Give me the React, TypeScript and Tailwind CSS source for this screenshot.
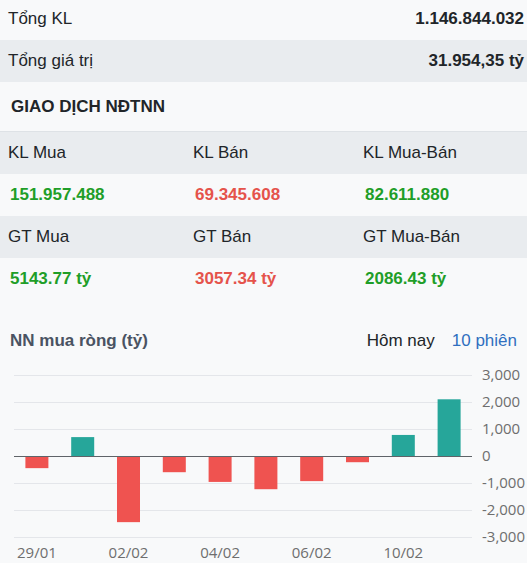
import React from "react";

const values = [-450, 700, -2450, -600, -960, -1230, -930, -230, 780, 2100];
const xLabels: [number, string][] = [
  [0, "29/01"],
  [2, "02/02"],
  [4, "04/02"],
  [6, "06/02"],
  [8, "10/02"],
];
const ticks = [3000, 2000, 1000, 0, -1000, -2000, -3000];

function Chart() {
  const x0 = 14;
  const x1 = 472;
  const zeroY = 98;
  const scale = 27 / 1000;
  const step = (x1 - x0) / values.length;
  const bw = 23;
  return (
    <svg width={527} height={204} className="block">
      {ticks.map((t) => {
        const y = zeroY - t * scale;
        return (
          <g key={t}>
            {t !== 0 && (
              <line x1={x0} x2={x1} y1={y + 0.5} y2={y + 0.5} stroke="#e4e6ea" strokeWidth={1} />
            )}
            <text
              x={482}
              y={y + 5}
              fontSize={15}
              fill="#6e6e6e"
              fontFamily="'Open Sans', 'Noto Sans', sans-serif"
            >
              {t.toLocaleString("en-US")}
            </text>
          </g>
        );
      })}
      {values.map((v, i) => {
        const cx = x0 + step * (i + 0.5);
        const h = Math.abs(v) * scale;
        const y = v >= 0 ? zeroY - h : zeroY;
        return (
          <rect
            key={i}
            x={cx - bw / 2}
            y={y}
            width={bw}
            height={h}
            fill={v >= 0 ? "#26a69a" : "#ef5350"}
          />
        );
      })}
      <line x1={x0} x2={x1} y1={zeroY + 0.5} y2={zeroY + 0.5} stroke="#5f6368" strokeWidth={1} />
      {xLabels.map(([i, l]) => (
        <text
          key={l}
          x={x0 + step * (i + 0.5)}
          y={200}
          fontSize={15}
          textAnchor="middle"
          fill="#6e6e6e"
          fontFamily="'Open Sans', 'Noto Sans', sans-serif"
        >
          {l}
        </text>
      ))}
    </svg>
  );
}

const green = "text-[#1f9e28]";
const red = "text-[#e5534b]";

export default function App() {
  return (
    <div className="w-[527px] h-[563px] overflow-hidden bg-[#f8f9fa] text-[17px] text-[#212529] font-['Liberation_Sans',Arial,sans-serif]">
      <div className="flex h-[40px] items-center justify-between pl-[8px] pr-[3px] pb-[3px]">
        <span>Tổng KL</span>
        <span className="font-bold">1.146.844.032</span>
      </div>
      <div className="flex h-[42px] items-center justify-between bg-[#e9ecef] pl-[8px] pr-[3px]">
        <span>Tổng giá trị</span>
        <span className="font-bold">31.954,35 tỷ</span>
      </div>
      <div className="flex h-[50px] items-center border-b border-[#dee2e6] pl-[11px] font-bold">
        GIAO DỊCH NĐTNN
      </div>
      <div className="grid grid-cols-[185px_170px_1fr]">
        <div className="flex h-[42px] items-center bg-[#e9ecef] pl-[8px]">KL Mua</div>
        <div className="flex h-[42px] items-center bg-[#e9ecef] pl-[8px]">KL Bán</div>
        <div className="flex h-[42px] items-center bg-[#e9ecef] pl-[8px]">KL Mua-Bán</div>
        <div className={`flex h-[42px] items-center pl-[10px] font-bold ${green}`}>151.957.488</div>
        <div className={`flex h-[42px] items-center pl-[10px] font-bold ${red}`}>69.345.608</div>
        <div className={`flex h-[42px] items-center pl-[10px] font-bold ${green}`}>82.611.880</div>
        <div className="flex h-[42px] items-center bg-[#e9ecef] pl-[8px]">GT Mua</div>
        <div className="flex h-[42px] items-center bg-[#e9ecef] pl-[8px]">GT Bán</div>
        <div className="flex h-[42px] items-center bg-[#e9ecef] pl-[8px]">GT Mua-Bán</div>
        <div className={`flex h-[42px] items-center pl-[10px] font-bold ${green}`}>5143.77 tỷ</div>
        <div className={`flex h-[42px] items-center pl-[10px] font-bold ${red}`}>3057.34 tỷ</div>
        <div className={`flex h-[42px] items-center pl-[10px] font-bold ${green}`}>2086.43 tỷ</div>
      </div>
      <div className="mt-[24px] flex h-[34px] items-center justify-between pl-[10px] pr-[10px]">
        <span className="font-bold text-[#4a5362]">NN mua ròng (tỷ)</span>
        <div className="flex items-center gap-[17px]">
          <span>Hôm nay</span>
          <span className="text-[#2f6fbf]">10 phiên</span>
        </div>
      </div>
      <Chart />
    </div>
  );
}
